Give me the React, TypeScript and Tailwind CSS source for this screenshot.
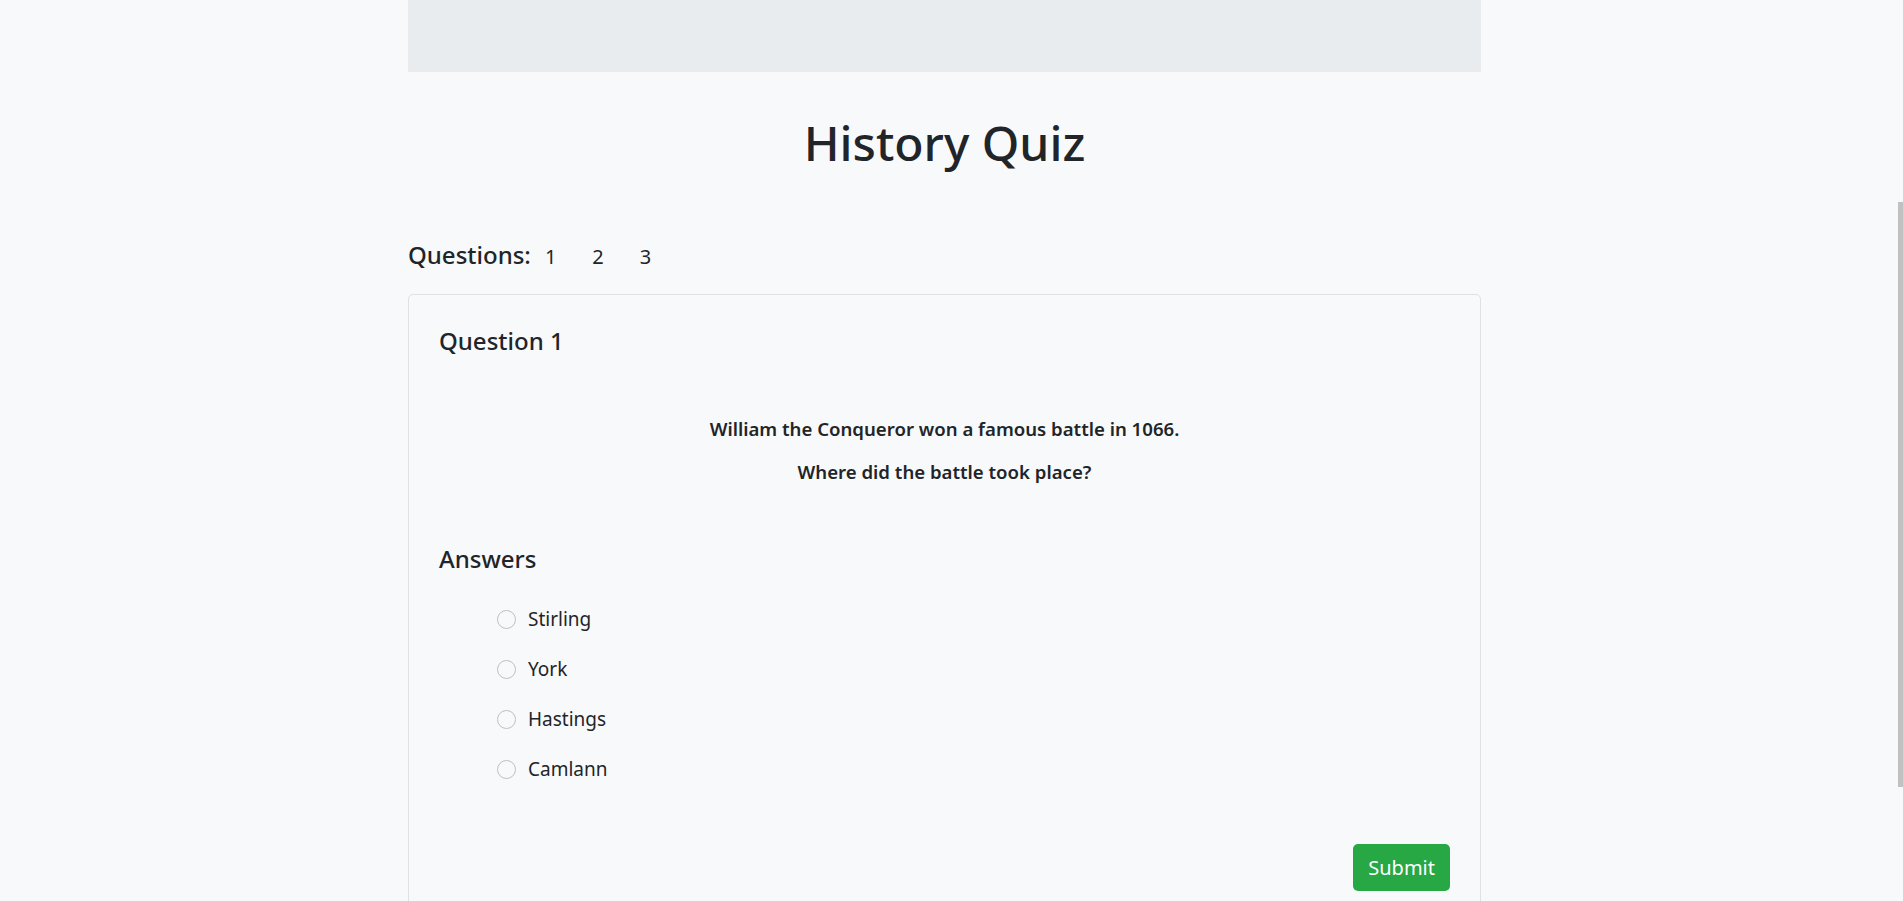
import type React from 'react';

const answers = ['Stirling', 'York', 'Hastings', 'Camlann'];

const AnswerOption: React.FC<{ label: string }> = ({ label }) => {
  return (
    <label className="flex items-center h-[30px] text-[19px] leading-[30px]">
      <span className="block size-[19px] shrink-0 rounded-full border border-[#bcc1c6] bg-[#f8f9fa]" />
      <span className="ml-[12px]">{label}</span>
    </label>
  );
};

const App: React.FC = () => {
  return (
    <div
      className="relative h-screen overflow-hidden bg-[#f8f9fa] text-[#212529]"
      style={{ fontFamily: '"Noto Sans", "Open Sans", sans-serif' }}
    >
      <div className="flex justify-center pr-[14px]">
        <div className="flex w-[1073px] flex-col">
          <div className="h-[72px] bg-[#e9ecef]" />

          <h1 className="mt-[42px] text-center text-[48px] font-medium leading-[1.2]">History Quiz</h1>

          <div className="mt-[69px] flex items-baseline">
            <h4 className="text-[24px] font-medium leading-[1.2]">Questions:</h4>
            <div className="ml-[14px] flex items-baseline gap-[36px] text-[20px]">
              <span>1</span>
              <span>2</span>
              <span>3</span>
            </div>
          </div>

          <div className="mt-[22px] rounded-[5px] border border-[#dfe2e5] px-[30px] pt-[32px] pb-[40px]">
            <h4 className="text-[24px] font-medium leading-[1.2]">Question 1</h4>

            <div className="mt-[60px] text-center text-[18.6px] font-semibold leading-[27px]">
              <p className="mb-4">William the Conqueror won a famous battle in 1066.</p>
              <p>Where did the battle took place?</p>
            </div>

            <h4 className="mt-[60px] text-[24px] font-medium leading-[1.2]">Answers</h4>

            <div className="mt-[30px] ml-[58px] flex flex-col gap-[20px]">
              {answers.map(a => (
                <AnswerOption key={a} label={a} />
              ))}
            </div>

            <div className="mt-[60px] flex justify-end">
              <button className="h-[47px] rounded-[5px] bg-[#28a745] px-[15px] text-[20px] text-white">
                Submit
              </button>
            </div>
          </div>
        </div>
      </div>

      {/* fake scrollbar thumb */}
      <div className="absolute right-0 top-[202px] h-[585px] w-[5px] bg-[#c1c1c1]" />
    </div>
  );
};

export default App;
